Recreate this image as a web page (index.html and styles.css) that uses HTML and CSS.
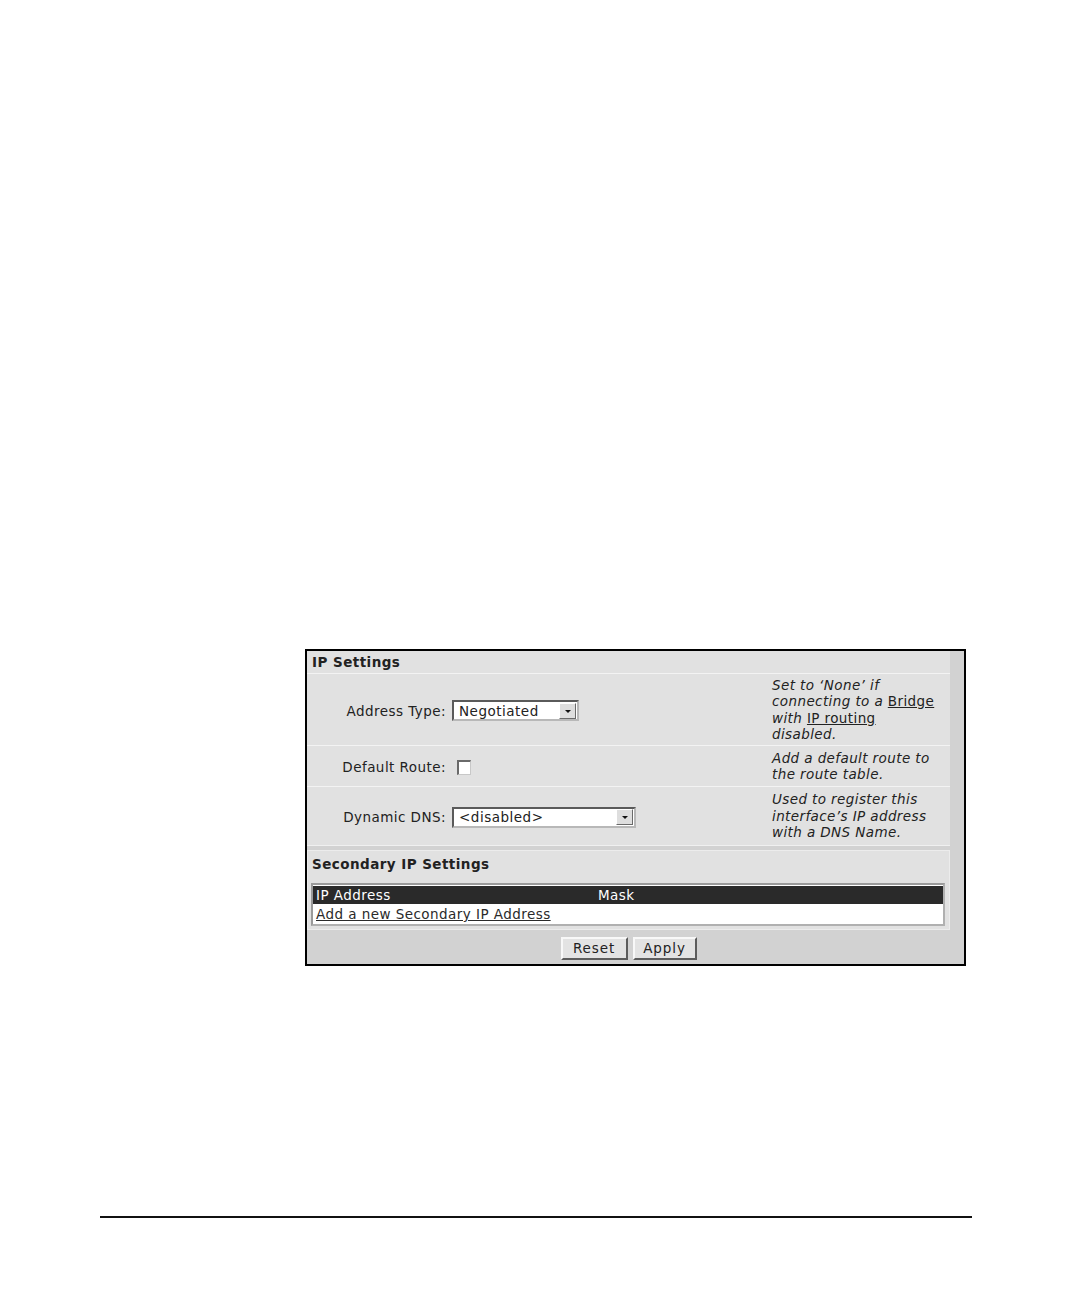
FILE: index.html
```html
<!DOCTYPE html>
<html>
<head>
<meta charset="utf-8">
<link rel="stylesheet" href="styles.css">
</head>
<body>
<div class="page">
  <div class="frame">
    <div class="main">
      <div class="panel ip-panel">
        <div class="panel-head">IP Settings</div>
        <div class="row h71">
          <div class="label">Address Type:</div>
          <div class="field">
            <div class="select w127"><span class="sel-text">Negotiated</span><span class="arrow"><span class="tri"></span></span></div>
          </div>
          <div class="help">Set to ‘None’ if connecting to a <u>Bridge</u> with <u>IP routing</u> disabled.</div>
        </div>
        <div class="row h40">
          <div class="label">Default Route:</div>
          <div class="field"><span class="checkbox"></span></div>
          <div class="help">Add a default route to the route table.</div>
        </div>
        <div class="row h58">
          <div class="label">Dynamic DNS:</div>
          <div class="field">
            <div class="select w184"><span class="sel-text">&lt;disabled&gt;</span><span class="arrow"><span class="tri"></span></span></div>
          </div>
          <div class="help">Used to register this interface’s IP address with a DNS Name.</div>
        </div>
      </div>
      <div class="panel sec-panel">
        <div class="sec-head">Secondary IP Settings</div>
        <div class="table">
          <div class="thead"><span class="col-ip">IP Address</span><span class="col-mask">Mask</span></div>
          <div class="trow"><a class="add-link">Add a new Secondary IP Address</a></div>
        </div>
      </div>
      <div class="buttons">
        <span class="btn btn-reset">Reset</span>
        <span class="btn btn-apply">Apply</span>
      </div>
    </div>
  </div>
  <div class="rule"></div>
</div>
</body>
</html>
```
FILE: styles.css
```css
html, body {
  margin: 0;
  padding: 0;
  background: #ffffff;
}
body {
  font-family: "DejaVu Sans", Verdana, sans-serif;
  font-size: 13.5px;
  color: #222222;
  letter-spacing: 0.45px;
}
.page {
  padding-top: 649px;
  padding-bottom: 60px;
}
.frame {
  margin-left: 305px;
  width: 657px;
  height: 313px;
  border: 2px solid #000;
  background: #d2d2d2;
}
.main {
  width: 643px;
  display: flex;
  flex-direction: column;
}
.panel {
  background: #e1e1e1;
}
.ip-panel {
  border-bottom: 1px solid #f0f0f0;
}
.panel-head {
  height: 22px;
  line-height: 22px;
  padding-left: 5px;
  font-weight: bold;
  border-bottom: 1px solid #f3f3f3;
}
.row {
  display: flex;
  align-items: center;
  border-bottom: 1px solid #f3f3f3;
}
.row:last-child {
  border-bottom: none;
}
.h71 { height: 71px; }
.h40 { height: 40px; }
.h58 { height: 58px; }
.label {
  width: 139px;
  padding-right: 6px;
  text-align: right;
  padding-top: 2px;
}
.field {
  flex: 1;
  display: flex;
  align-items: center;
  padding-top: 2px;
}
.help {
  width: 166px;
  font-style: italic;
  line-height: 16.4px;
  padding-right: 12px;
  letter-spacing: 0.4px;
}
.help u {
  font-style: normal;
}
.select {
  display: flex;
  align-items: center;
  height: 17px;
  background: #fff;
  border-top: 2px solid #5a5a5a;
  border-left: 2px solid #5a5a5a;
  border-right: 2px solid #b8b8b8;
  border-bottom: 2px solid #b8b8b8;
}
.w127 { width: 123px; }
.w184 { width: 180px; }
.sel-text {
  flex: 1;
  padding-left: 5px;
  letter-spacing: 0.5px;
}
.arrow {
  width: 17px;
  height: 16px;
  margin-right: 1px;
  box-sizing: border-box;
  background: #dedede;
  border-top: 1px solid #fff;
  border-left: 1px solid #fff;
  border-right: 1px solid #6a6a6a;
  border-bottom: 1px solid #6a6a6a;
  display: flex;
  align-items: center;
  justify-content: center;
}
.tri {
  width: 0;
  height: 0;
  border-left: 3px solid transparent;
  border-right: 3px solid transparent;
  border-top: 3px solid #111;
  margin-top: 1px;
}
.checkbox {
  display: block;
  margin-left: 5px;
  width: 11px;
  height: 12px;
  background: #fff;
  border-top: 2px solid #6a6a6a;
  border-left: 2px solid #6a6a6a;
  border-right: 1px solid #c8c8c8;
  border-bottom: 1px solid #c8c8c8;
}
.sec-panel {
  margin-top: 4px;
  border: 1px solid #ececec;
  padding-bottom: 3px;
}
.sec-head {
  height: 32px;
  line-height: 27px;
  padding-left: 4px;
  font-weight: bold;
}
.table {
  margin-left: 3px;
  margin-right: 4px;
  border-top: 2px solid #9a9a9a;
  border-left: 2px solid #9a9a9a;
  border-right: 2px solid #b0b0b0;
  border-bottom: 2px solid #b0b0b0;
  background: #fff;
  padding-top: 1px;
}
.thead {
  display: flex;
  height: 18px;
  line-height: 19px;
  background: #2a2a2a;
  color: #fff;
  padding-left: 3px;
}
.col-ip {
  width: 282px;
}
.trow {
  height: 20px;
  line-height: 20px;
  padding-left: 3px;
  background: #fff;
}
.add-link {
  color: #2a2a2a;
  text-decoration: underline;
}
.buttons {
  display: flex;
  justify-content: center;
  gap: 5px;
  margin-top: 7px;
}
.btn {
  display: block;
  box-sizing: border-box;
  height: 23px;
  line-height: 19px;
  text-align: center;
  background: #e3e3e3;
  border-top: 2px solid #f8f8f8;
  border-left: 2px solid #f8f8f8;
  border-right: 2px solid #5c5c5c;
  border-bottom: 2px solid #5c5c5c;
  letter-spacing: 0.9px;
}
.btn-reset { width: 67px; }
.btn-apply { width: 64px; }
.rule {
  margin-top: 250px;
  margin-left: 100px;
  width: 872px;
  height: 2px;
  background: #111;
}
```
